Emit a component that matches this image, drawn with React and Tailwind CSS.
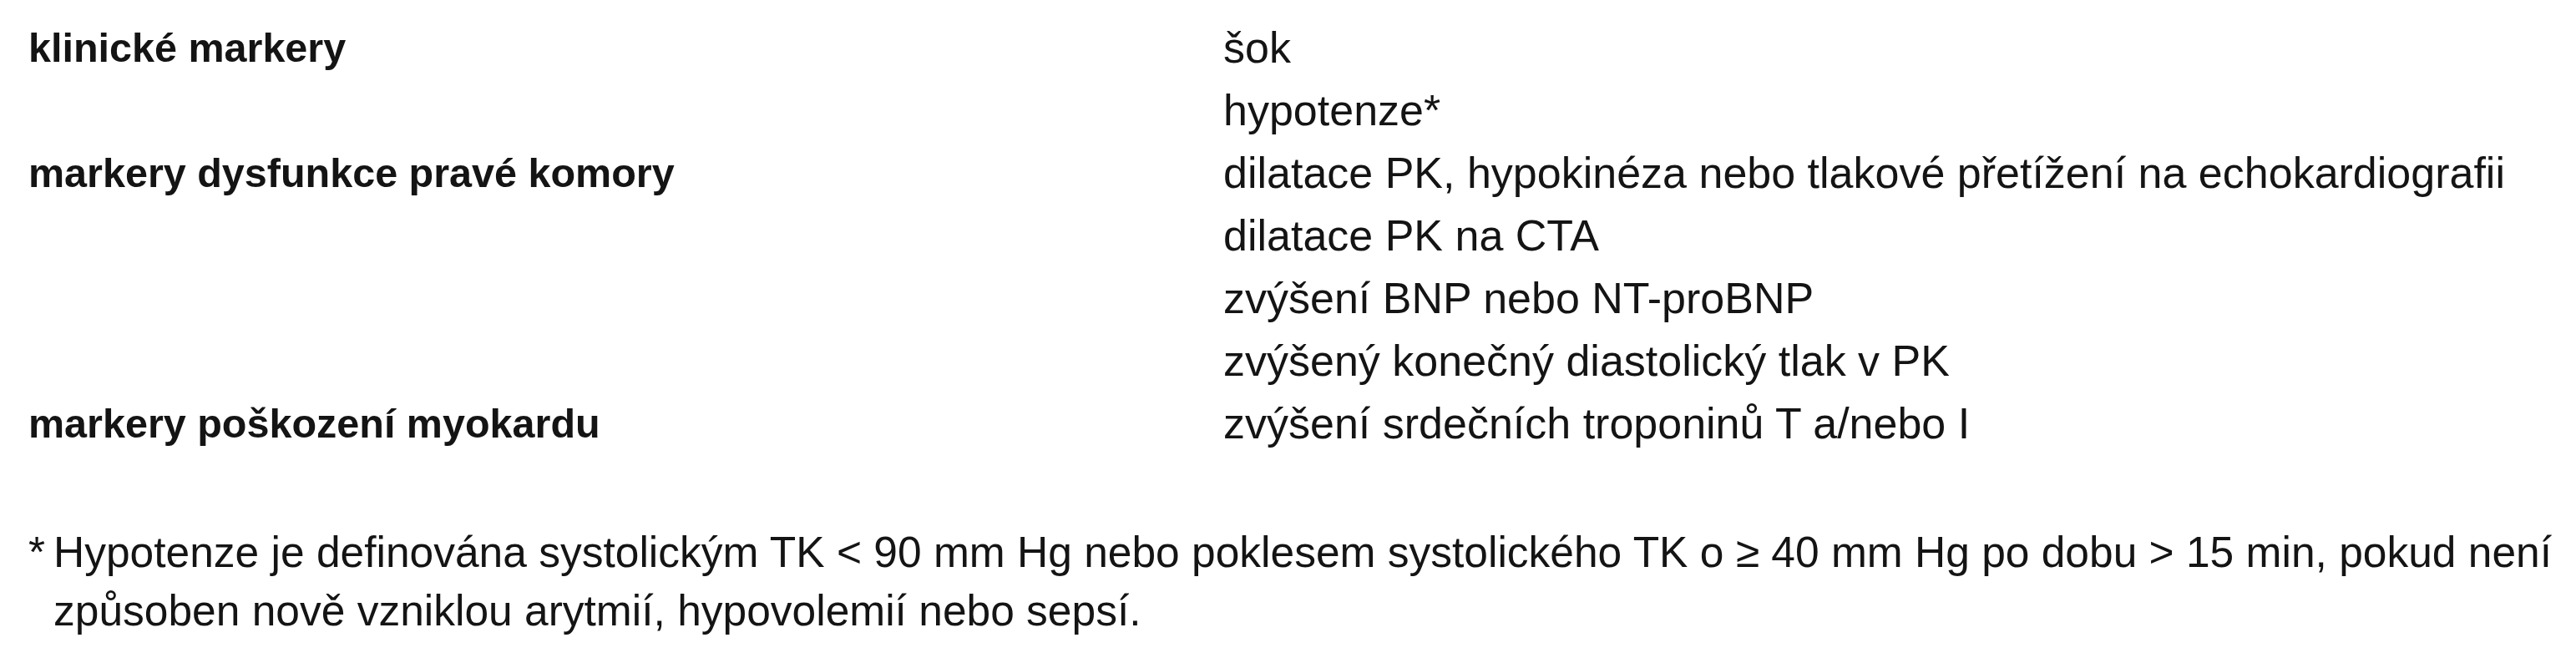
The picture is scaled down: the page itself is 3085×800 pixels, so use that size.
import React from 'react';

// řádky tabulky: kategorie markerů a jednotlivé markery
const rows = [
  { label: 'klinické markery', items: ['šok', 'hypotenze*'] },
  {
    label: 'markery dysfunkce pravé komory',
    items: [
      'dilatace PK, hypokinéza nebo tlakové přetížení na echokardiografii',
      'dilatace PK na CTA',
      'zvýšení BNP nebo NT-proBNP',
      'zvýšený konečný diastolický tlak v PK',
    ],
  },
  { label: 'markery poškození myokardu', items: ['zvýšení srdečních troponinů T a/nebo I'] },
];

const App = () => {
  return (
    <div className="min-h-[800px] w-[3085px] bg-white pl-[34px] pt-[20px] text-[#141414] font-['Liberation_Sans',Arial,sans-serif]">
      <div className="grid grid-cols-[1431px_1fr] text-[52px] leading-[75px]">
        {rows.map((row) => (
          <React.Fragment key={row.label}>
            <div className="text-[48.5px] font-bold">{row.label}</div>
            <div>
              {row.items.map((item) => (
                <div key={item}>{item}</div>
              ))}
            </div>
          </React.Fragment>
        ))}
      </div>

      <div className="mt-[81px] flex whitespace-nowrap text-[51.5px] leading-[70px]">
        <span className="w-[30px] shrink-0">*</span>
        <p>
          Hypotenze je definována systolickým TK &lt; 90 mm Hg nebo poklesem systolického TK o ≥ 40 mm Hg po dobu &gt; 15 min, pokud není
          <br />
          způsoben nově vzniklou arytmií, hypovolemií nebo sepsí.
        </p>
      </div>
    </div>
  );
};

export default App;
